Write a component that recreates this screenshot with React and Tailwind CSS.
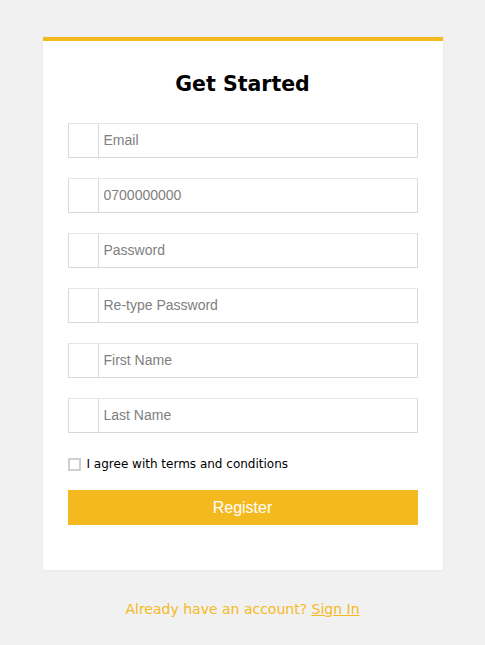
import React from "react";

const fields = [
  { placeholder: "Email", type: "email" },
  { placeholder: "0700000000", type: "tel" },
  { placeholder: "Password", type: "password" },
  { placeholder: "Re-type Password", type: "password" },
  { placeholder: "First Name", type: "text" },
  { placeholder: "Last Name", type: "text" },
];

const Field = ({ placeholder, type }) => (
  <div className="flex h-[35px] border border-[#d9d9d9] border-t-[#e6e6e6]">
    <span className="w-[30px] shrink-0 border-r border-[#d9d9d9]" />
    <input
      type={type}
      placeholder={placeholder}
      className="flex-1 min-w-0 px-[5px] text-[14px] text-[#333] placeholder:text-[#808080] outline-none font-['Liberation_Sans',Arial,sans-serif]"
    />
  </div>
);

export default function App() {
  return (
    <div className="min-h-[645px] bg-[#f1f1f1] pt-[37px] font-['DejaVu_Sans',Verdana,sans-serif]">
      <div className="mx-auto w-[400px] bg-white border-t-4 border-[#f4b91e] shadow-[0_0_2px_rgba(0,0,0,0.08)] px-[25px] pt-[29px] pb-[45px]">
        <h1 className="text-center text-[20.5px] font-bold text-black leading-[28px]">
          Get Started
        </h1>

        <form className="mt-[25px] flex flex-col gap-[20px]">
          {fields.map((f) => (
            <Field key={f.placeholder} {...f} />
          ))}
        </form>

        <label className="mt-[22px] flex items-center gap-[6px] text-[12px] text-black">
          <span className="w-[13px] h-[13px] border-2 border-[#cfcfcf] bg-white" />
          I agree with terms and conditions
        </label>

        <button className="mt-[17px] w-full h-[35px] bg-[#f4b91e] text-white text-[16px] font-['Liberation_Sans',Arial,sans-serif]">
          Register
        </button>
      </div>

      <p className="mt-[29px] text-center text-[14px] text-[#f4b91e]">
        Already have an account?{" "}
        <a href="#" className="underline">
          Sign In
        </a>
      </p>
    </div>
  );
}
